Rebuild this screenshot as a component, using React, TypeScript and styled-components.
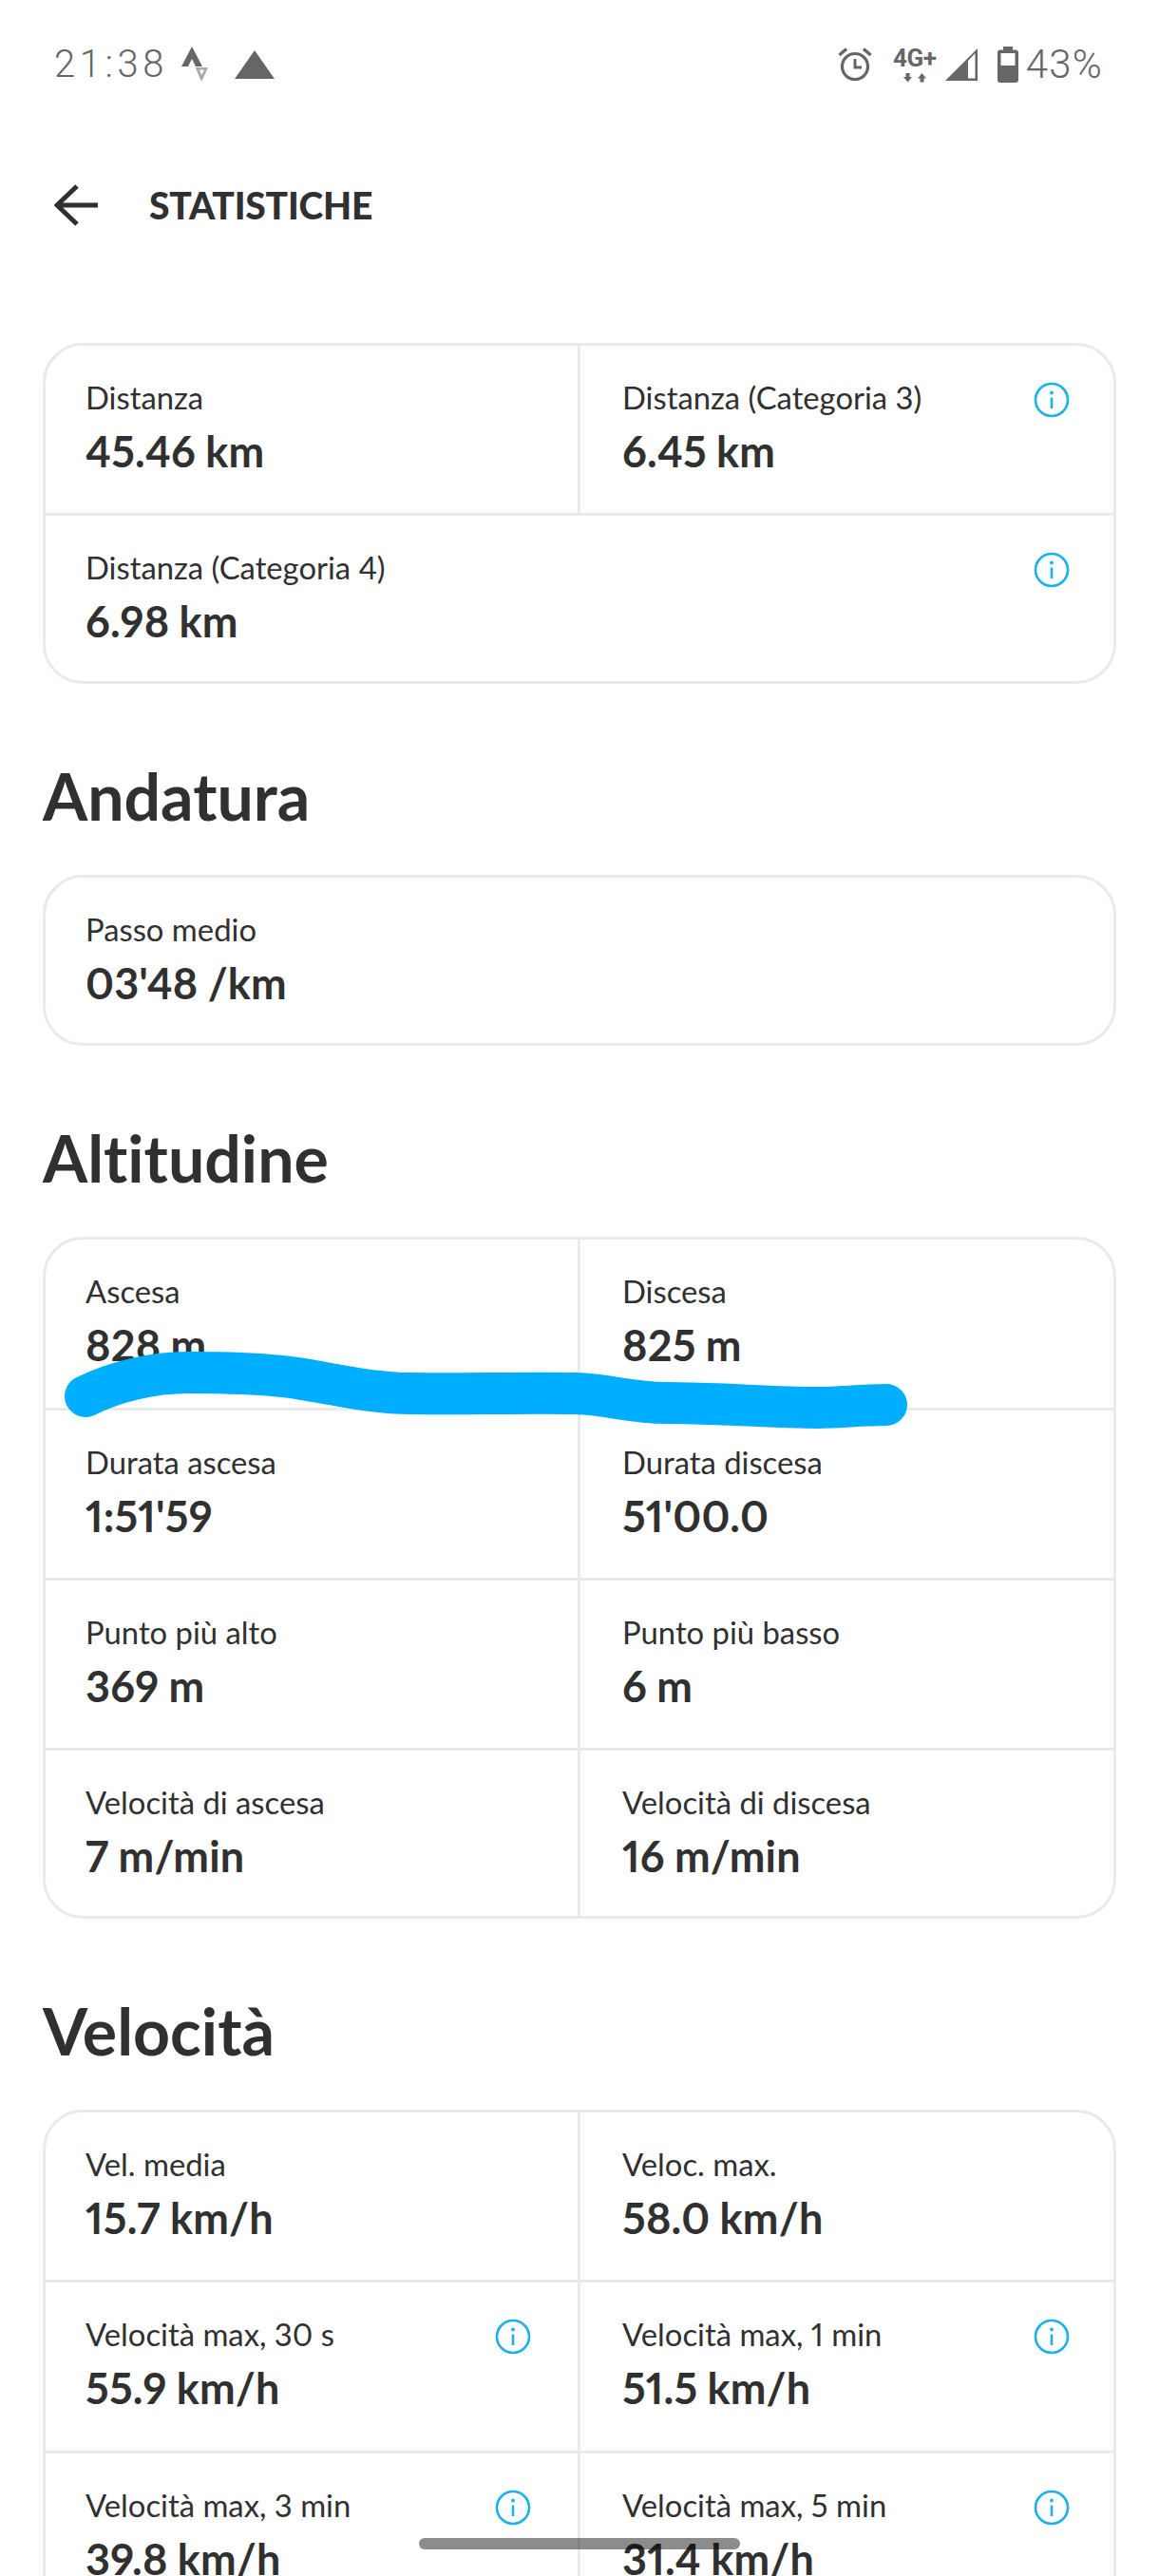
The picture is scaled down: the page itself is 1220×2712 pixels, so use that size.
import React from "react";
import styled, { createGlobalStyle } from "styled-components";

const Global = createGlobalStyle`
  html, body { margin: 0; padding: 0; background: #fff; }
  * { box-sizing: border-box; }
`;

const Root = styled.div`
  position: relative;
  width: 1220px;
  height: 2712px;
  overflow: hidden;
  background: #fff;
  color: #303030;
  font-family: "Lato", "Liberation Sans", sans-serif;
  font-variant-ligatures: none;
  font-variant-numeric: proportional-nums;
`;

const StatusBar = styled.div`
  height: 136px;
  padding: 0 59px 0 57px;
  display: flex;
  align-items: center;
  justify-content: space-between;
  color: #666;
  font-family: "Roboto", "Liberation Sans", sans-serif;
`;

const StatusGroup = styled.div`
  display: flex;
  align-items: center;
`;

const StatusText = styled.span`
  font-size: 40px;
  font-weight: 300;
  font-variant-numeric: tabular-nums;
  letter-spacing: 4.6px;
  line-height: 1;
`;

const Percent = styled(StatusText)`
  font-size: 42px;
  letter-spacing: 1.2px;
  margin-left: 8px;
`;

const NetStack = styled.div`
  display: flex;
  flex-direction: column;
  align-items: center;
  width: 48px;
  margin: 0 7px 0 21px;
`;

const NetLabel = styled.span`
  font-size: 26px;
  font-weight: 700;
  line-height: 24px;
  letter-spacing: -0.5px;
`;

const TopBar = styled.div`
  height: 160px;
  padding-left: 57px;
  display: flex;
  align-items: center;
  gap: 54px;
`;

const PageTitle = styled.h1`
  margin: 0;
  font-size: 39px;
  font-weight: 900;
  letter-spacing: -0.2px;
  line-height: 1;
`;

const Main = styled.main`
  padding: 65px 45px 0;
`;

const Card = styled.section`
  display: grid;
  grid-template-columns: 563px 1fr;
  border: 3px solid #e9eaec;
  border-radius: 42px;
  overflow: hidden;
`;

const Cell = styled.div<{ $wide?: boolean; $left?: boolean; $lastRow?: boolean }>`
  grid-column: ${(p) => (p.$wide ? "span 2" : "auto")};
  height: ${(p) => (p.$lastRow ? "174px" : "179.3px")};
  padding: 36px ${(p) => (p.$left ? "49px" : "46px")} 0 ${(p) => (p.$left || p.$wide ? "42px" : "44px")};
  border-right: ${(p) => (p.$left ? "3px solid #e9eaec" : "none")};
  border-bottom: ${(p) => (p.$lastRow ? "none" : "3px solid #e9eaec")};
  display: flex;
  align-items: flex-start;
  justify-content: space-between;
`;

const CellText = styled.div`
  display: flex;
  flex-direction: column;
`;

const Label = styled.span`
  font-size: 32.8px;
  line-height: 38px;
  font-weight: 400;
`;

const Value = styled.span`
  margin-top: 15px;
  font-size: 45px;
  line-height: 44px;
  font-weight: 700;
  letter-spacing: 0.2px;
  word-spacing: -1px;
`;

const SectionTitle = styled.h2`
  margin: 0;
  height: 201px;
  padding-top: 78px;
  font-size: 68px;
  line-height: 80px;
  font-weight: 700;
`;

const HomePill = styled.div`
  position: absolute;
  left: 441px;
  top: 2672px;
  width: 338px;
  height: 12px;
  border-radius: 6px;
  background: rgba(0, 0, 0, 0.45);
`;

const Scribble = styled.svg`
  position: absolute;
  left: 0;
  top: 1400px;
  width: 1220px;
  height: 140px;
`;

const InfoSvg = styled.svg`
  flex: none;
  margin-top: 2px;
`;

const InfoIcon = () => (
  <InfoSvg width="38" height="38" viewBox="0 0 38 38" fill="none" stroke="#1bb1ec">
    <circle cx="19" cy="19" r="17" strokeWidth="2.6" />
    <circle cx="19" cy="11.5" r="1.9" fill="#1bb1ec" stroke="none" />
    <path d="M19 16.5V28" strokeWidth="2.6" />
  </InfoSvg>
);

type Stat = { label: string; value: string; info?: boolean };

const StatCard = ({ rows }: { rows: Stat[][] }) => (
  <Card>
    {rows.flatMap((row, r) =>
      row.map((s, c) => (
        <Cell
          key={`${r}-${c}`}
          $wide={row.length === 1}
          $left={row.length === 2 && c === 0}
          $lastRow={r === rows.length - 1}
        >
          <CellText>
            <Label>{s.label}</Label>
            <Value>{s.value}</Value>
          </CellText>
          {s.info && <InfoIcon />}
        </Cell>
      ))
    )}
  </Card>
);

const distance: Stat[][] = [
  [
    { label: "Distanza", value: "45.46 km" },
    { label: "Distanza (Categoria 3)", value: "6.45 km", info: true },
  ],
  [{ label: "Distanza (Categoria 4)", value: "6.98 km", info: true }],
];

const pace: Stat[][] = [[{ label: "Passo medio", value: "03'48 /km" }]];

const altitude: Stat[][] = [
  [
    { label: "Ascesa", value: "828 m" },
    { label: "Discesa", value: "825 m" },
  ],
  [
    { label: "Durata ascesa", value: "1:51'59" },
    { label: "Durata discesa", value: "51'00.0" },
  ],
  [
    { label: "Punto più alto", value: "369 m" },
    { label: "Punto più basso", value: "6 m" },
  ],
  [
    { label: "Velocità di ascesa", value: "7 m/min" },
    { label: "Velocità di discesa", value: "16 m/min" },
  ],
];

const speed: Stat[][] = [
  [
    { label: "Vel. media", value: "15.7 km/h" },
    { label: "Veloc. max.", value: "58.0 km/h" },
  ],
  [
    { label: "Velocità max, 30 s", value: "55.9 km/h", info: true },
    { label: "Velocità max, 1 min", value: "51.5 km/h", info: true },
  ],
  [
    { label: "Velocità max, 3 min", value: "39.8 km/h", info: true },
    { label: "Velocità max, 5 min", value: "31.4 km/h", info: true },
  ],
];

export default function App() {
  return (
    <Root>
      <Global />
      <StatusBar>
        <StatusGroup>
          <StatusText>21:38</StatusText>
          <svg width="30" height="38" viewBox="0 0 30 38" style={{ marginLeft: 14 }}>
            <path d="M11 0L22 21H15L11 13L7 21H0Z" fill="#666" />
            <path d="M14.5 22H28L21.2 37Z M19 24.5L21.2 30L24 24.5Z" fill="#aaa" fillRule="evenodd" />
          </svg>
          <svg width="42" height="30" viewBox="0 0 42 30" style={{ marginLeft: 26 }}>
            <path d="M21 0L42 30H0Z" fill="#666" />
          </svg>
        </StatusGroup>
        <StatusGroup>
          <svg width="36" height="36" viewBox="0 0 36 36" fill="none" stroke="#666">
            <circle cx="18" cy="20" r="13.5" strokeWidth="3.2" />
            <path d="M18 12V21H25" strokeWidth="3" />
            <path d="M9 1.5L1.5 8M27 1.5L34.5 8" strokeWidth="3.4" />
          </svg>
          <NetStack>
            <NetLabel>4G+</NetLabel>
            <svg width="24" height="10" viewBox="0 0 24 10" style={{ marginTop: 4 }}>
              <path d="M2.5 0H6.5V4H9L4.5 9.5L0 4H2.5Z M17.5 9.5H21.5V5.5H24L19.5 0L15 5.5H17.5Z" fill="#666" />
            </svg>
          </NetStack>
          <svg width="36" height="36" viewBox="0 0 36 36">
            <path d="M35 1V35H1Z" fill="#666" />
            <path d="M25 14V32.5H32.5V6Z" fill="#fff" />
          </svg>
          <svg width="22" height="38" viewBox="0 0 22 38" style={{ marginLeft: 20 }}>
            <path
              d="M6 0H16V3.5H19A3 3 0 0 1 22 6.5V35A3 3 0 0 1 19 38H3A3 3 0 0 1 0 35V6.5A3 3 0 0 1 3 3.5H6Z M3.5 7V20H18.5V7Z"
              fill="#666"
              fillRule="evenodd"
            />
          </svg>
          <Percent>43%</Percent>
        </StatusGroup>
      </StatusBar>

      <TopBar>
        <svg width="46" height="44" viewBox="0 0 46 44" fill="none" stroke="#303030" strokeWidth="5">
          <path d="M46 22H3M24 2L3 22L24 42" />
        </svg>
        <PageTitle>STATISTICHE</PageTitle>
      </TopBar>

      <Main>
        <StatCard rows={distance} />
        <SectionTitle>Andatura</SectionTitle>
        <StatCard rows={pace} />
        <SectionTitle>Altitudine</SectionTitle>
        <StatCard rows={altitude} />
        <SectionTitle>Velocità</SectionTitle>
        <StatCard rows={speed} />
      </Main>

      <Scribble viewBox="0 1400 1220 140" fill="none">
        <path
          d="M90 1470C120 1455 160 1445 198 1445C240 1445 285 1446 319 1452C360 1459 395 1467 434 1467C490 1468 550 1466 606 1467C640 1468 665 1477 701 1477C760 1477 810 1482 861 1482C885 1482 905 1479 933 1479"
          stroke="#00aeff"
          strokeWidth="44"
          strokeLinecap="round"
        />
      </Scribble>
      <HomePill />
    </Root>
  );
}
